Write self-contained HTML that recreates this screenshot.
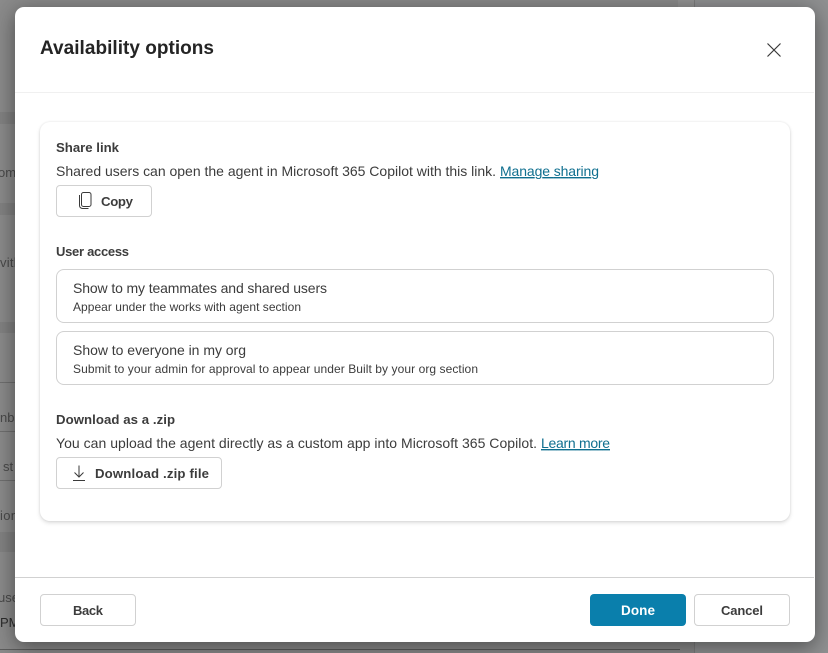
<!DOCTYPE html>
<html lang="en">
<head>
<meta charset="utf-8">
<title>Availability options</title>
<style>
html,body{margin:0;padding:0;width:828px;height:653px;overflow:hidden;background:#8a8a8a;font-family:"Liberation Sans",sans-serif}
.abs{position:absolute;box-sizing:border-box}
.band{left:0;width:15px;background:#818181}
.line{left:0;width:15px;height:1px;background:#6f6f6f}
.modal{left:15px;top:7px;width:800px;height:635px;background:#fff;border-radius:9px;box-shadow:0 0 20px rgba(0,0,0,.2),0 8px 20px rgba(0,0,0,.28)}
.panel{left:40px;top:122px;width:750px;height:399px;background:#fff;border-radius:10px;box-shadow:0 0 2px rgba(0,0,0,.1),0 2px 4px rgba(0,0,0,.13)}
.btn{background:#fff;border:1px solid #d1d1d1;border-radius:4px}
.card{left:56px;width:718px;height:54px;background:#fff;border:1px solid #d1d1d1;border-radius:8px}
svg.t{position:absolute;left:0;top:0}
text{font-family:"Liberation Sans",sans-serif;fill:#242424;font-size:14px}
.b{font-weight:700}
.bg{fill:#3c3c3c}
.h{font-size:13.2px}
.s{fill:#4a4a4a;font-size:13px}
.l{fill:#0f6f8f;text-decoration:underline}
</style>
</head>
<body>
<div class="abs" style="left:678px;top:0;width:16px;height:7px;background:#929292"></div>
<div class="abs" style="left:694px;top:0;width:134px;height:653px;background:#8f9091"></div>
<div class="abs" style="left:694px;top:0;width:1px;height:653px;background:#7c7c7c"></div>
<div class="abs band" style="top:112px;height:12px"></div>
<div class="abs band" style="top:203px;height:12px"></div>
<div class="abs band" style="top:322px;height:11px"></div>
<div class="abs band" style="top:532px;height:20px"></div>
<div class="abs line" style="top:382px"></div>
<div class="abs line" style="top:431px"></div>
<div class="abs line" style="top:480px"></div>
<div class="abs" style="left:0;top:649px;width:680px;height:1px;background:#5c5c5c"></div>
<svg class="t" width="15" height="653" viewBox="0 0 15 653">
<text class="s" x="-2" y="177">om</text>
<text class="s" x="0" y="267" textLength="21">vith</text>
<text class="s" x="0" y="422">nb</text>
<text class="s" x="3" y="471">st</text>
<text class="s" x="0" y="520" textLength="18">ion</text>
<text class="s" x="-2" y="602">use</text>
<text class="s" x="0" y="627" style="fill:#2c2c2c">PM</text>
</svg>

<div class="abs modal"></div>
<div class="abs" style="left:15px;top:92px;width:799px;height:1px;background:#f0f0f0"></div>
<div class="abs" style="left:15px;top:577px;width:799px;height:1px;background:#d1d1d1"></div>
<div class="abs panel"></div>
<div class="abs btn" style="left:56px;top:185px;width:96px;height:32px"></div>
<div class="abs card" style="top:269px"></div>
<div class="abs card" style="top:331px"></div>
<div class="abs btn" style="left:56px;top:457px;width:166px;height:32px"></div>
<div class="abs btn" style="left:40px;top:594px;width:96px;height:32px"></div>
<div class="abs" style="left:590px;top:594px;width:96px;height:32px;background:#0a7fac;border-radius:4px"></div>
<div class="abs btn" style="left:694px;top:594px;width:96px;height:32px"></div>

<svg class="t" width="828" height="653" viewBox="0 0 828 653">
<text class="b" x="40" y="54" style="font-size:19px" textLength="174">Availability options</text>
<path d="M767.5 43.5L780.5 56.5M780.5 43.5L767.5 56.5" stroke="#3a3a3a" stroke-width="1.2" fill="none"/>

<text class="b bg h" x="56" y="152" textLength="63">Share link</text>
<text class="bg" x="56" y="176" textLength="440">Shared users can open the agent in Microsoft 365 Copilot with this link.</text>
<text class="l" x="500" y="176" textLength="99">Manage sharing</text>

<rect x="81.5" y="192.5" width="9.5" height="14" rx="2" stroke="#3a3a3a" stroke-width="1" fill="none"/>
<path d="M79.5 195v10.5a3 3 0 0 0 3 3h6" stroke="#3a3a3a" stroke-width="1" fill="none"/>
<text class="b bg h" x="101" y="206" textLength="32">Copy</text>

<text class="b bg" x="56" y="256" style="font-size:13px" textLength="73">User access</text>
<text class="bg" x="73" y="293" textLength="254">Show to my teammates and shared users</text>
<text class="bg" x="73" y="311" style="font-size:12px" textLength="228">Appear under the works with agent section</text>
<text class="bg" x="73" y="355" textLength="173">Show to everyone in my org</text>
<text class="bg" x="73" y="373" style="font-size:12px" textLength="405">Submit to your admin for approval to appear under Built by your org section</text>

<text class="b bg h" x="56" y="424" textLength="119">Download as a .zip</text>
<text class="bg" x="56" y="448" textLength="481">You can upload the agent directly as a custom app into Microsoft 365 Copilot.</text>
<text class="l" x="541" y="448" textLength="69">Learn more</text>

<path d="M79 465.5V477M74.5 472.5L79 477L83.5 472.5M73 480.5H85" stroke="#3a3a3a" stroke-width="1" fill="none"/>
<text class="b bg h" x="95" y="478" textLength="114">Download .zip file</text>

<text class="b bg" x="73" y="615" style="font-size:13px" textLength="30">Back</text>
<text class="b" x="621" y="615" style="fill:#fff;font-size:13.5px" textLength="34">Done</text>
<text class="b bg" x="721" y="615" style="font-size:13px" textLength="42">Cancel</text>
</svg>
</body>
</html>
